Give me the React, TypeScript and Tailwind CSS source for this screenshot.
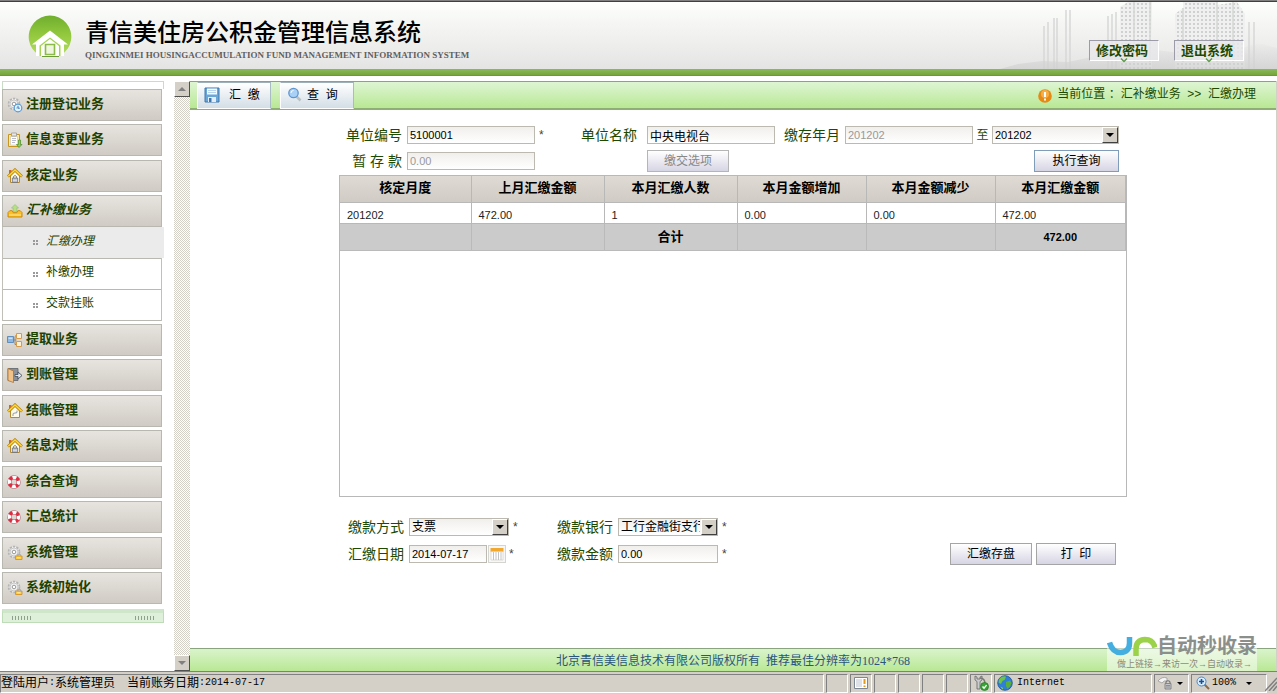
import React from 'react';
import clsx from 'clsx';

type IconName =
  | 'gearClock'
  | 'clipboard'
  | 'houseLock'
  | 'tray'
  | 'tree'
  | 'door'
  | 'housePen'
  | 'lifebuoy'
  | 'gearKey';

interface MenuItem {
  label: string;
  icon: IconName;
  children?: string[];
}

const MENU: MenuItem[] = [
  { label: '注册登记业务', icon: 'gearClock' },
  { label: '信息变更业务', icon: 'clipboard' },
  { label: '核定业务', icon: 'houseLock' },
  { label: '汇补缴业务', icon: 'tray', children: ['汇缴办理', '补缴办理', '交款挂账'] },
];

const MENU_REST: MenuItem[] = [
  { label: '提取业务', icon: 'tree' },
  { label: '到账管理', icon: 'door' },
  { label: '结账管理', icon: 'housePen' },
  { label: '结息对账', icon: 'houseLock' },
  { label: '综合查询', icon: 'lifebuoy' },
  { label: '汇总统计', icon: 'lifebuoy' },
  { label: '系统管理', icon: 'gearKey' },
  { label: '系统初始化', icon: 'gearKey' },
];

const COLUMNS = ['核定月度', '上月汇缴金额', '本月汇缴人数', '本月金额增加', '本月金额减少', '本月汇缴金额'];
const ROW = ['201202', '472.00', '1', '0.00', '0.00', '472.00'];

const Gear = () => (
  <>
    <circle cx="7" cy="7" r="5.4" fill="#f4f4f4" stroke="#b4b4b4" strokeWidth="1.8" strokeDasharray="2.2 1.2" />
    <circle cx="7" cy="7" r="4" fill="#f2f2f2" stroke="#bdbdbd" strokeWidth="0.8" />
    <circle cx="7" cy="7" r="1.8" fill="#fff" stroke="#8f8f8f" strokeWidth="0.9" />
  </>
);

const House = () => (
  <>
    <path d="M2 2h2.500v4H2z" fill="#d2642c" />
    <path d="M3.500 8v6.500h9V8L8 3.500z" fill="#fffbe8" stroke="#b98a2c" />
    <path d="M1 8.500 8 1.800l7 6.700" fill="none" stroke="#b8860b" strokeWidth="2.800" />
    <path d="M1.300 8.300 8 2l6.700 6.300" fill="none" stroke="#ffd83d" strokeWidth="1.500" />
  </>
);

const MenuIcon: React.FC<{ name: IconName }> = ({ name }) => (
  <svg viewBox="0 0 16 16" className="size-4 shrink-0" aria-hidden="true">
    {name === 'gearClock' && (
      <>
        <Gear />
        <circle cx="11" cy="11" r="3.8" fill="#e4f3ff" stroke="#5a9bd4" strokeWidth="1.2" />
        <path d="M11 8.8v2.4h1.8M9.5 11h1" fill="none" stroke="#3a78b8" />
      </>
    )}
    {name === 'gearKey' && (
      <>
        <Gear />
        <path d="M8.500 11H15v3.500H8.500z" fill="#ffc83a" stroke="#d18d1c" strokeWidth="0.8" />
        <path d="M10.3 11V9.6h3.2V11" fill="none" stroke="#a8a8a8" />
        <path d="M10 12.8h3.500" stroke="#fff0b0" />
      </>
    )}
    {name === 'clipboard' && (
      <>
        <path d="M1.5 2.5h11v12h-11z" fill="#fbe9a8" stroke="#c8961d" />
        <path d="M3.5 4.5h7v8.5h-7z" fill="#fff" stroke="#c9c3b0" strokeWidth="0.6" />
        <path d="M4.5 1h5v3h-5z" fill="#e8e8e8" stroke="#999" strokeWidth="0.8" />
        <path d="M5 6.5h4M5 8.5h4M5 10.5h3" stroke="#a9a9c4" strokeWidth="0.8" />
        <path d="M11.5 8v4.5h-2l2.500 3 3-3h-1.500V8z" fill="#8ccf52" stroke="#4c8b28" strokeWidth="0.7" />
      </>
    )}
    {name === 'houseLock' && (
      <>
        <House />
        <path d="M6.5 9.800V8.500q1.500-2 3 0v1.300" fill="none" stroke="#777" />
        <path d="M5.300 10h5.400v4.500H5.300z" fill="#b8bdc4" stroke="#6c7077" strokeWidth="0.8" />
        <path d="M6 12.200h4" stroke="#eef" strokeWidth="0.8" />
      </>
    )}
    {name === 'housePen' && (
      <>
        <House />
        <path d="M6 13q-.5-3 2-3t2-2.500" fill="none" stroke="#9aa6b8" strokeWidth="1.2" />
      </>
    )}
    {name === 'tray' && (
      <>
        <path d="M8 1.5 11.5 5H9.800v4H6.200V5H4.500z" fill="#b4e080" stroke="#9cc47a" strokeWidth="0.8" />
        <path d="m1 9.500 1.800-1.800h2.400l1 2h3.600l1-2h2.400L15 9.500V14H1z" fill="#ffbf1f" stroke="#c98a10" />
        <path d="M2 12h12" stroke="#ffe48a" strokeWidth="1.2" />
      </>
    )}
    {name === 'tree' && (
      <>
        <path d="M6 8h3.500M8 4.500v8M8 4h2M8 12.500h2" fill="none" stroke="#888" />
        <path d="M.5 4.500h6v6h-6z" fill="#8db9e4" stroke="#4d7fb2" strokeWidth="0.8" />
        <path d="M1.500 5.500h4v1.500h-4z" fill="#c9e1f7" />
        <path d="M9.500 1.500h5v5h-5zM9.500 9.500h5v5h-5z" fill="#fff1d8" stroke="#d79a4a" />
      </>
    )}
    {name === 'door' && (
      <>
        <path d="M1 1.500h10v12H1z" fill="#8a8f98" stroke="#5e636b" strokeWidth="0.8" />
        <path d="M1 1.500 6.500 4v11.500L1 13.500z" fill="#f1c28a" stroke="#ab7434" strokeWidth="0.8" />
        <path d="M8 7.500h3V5l4 3.500-4 3.500V9.500H8z" fill="#dfe6ee" stroke="#4a5563" strokeWidth="0.9" />
      </>
    )}
    {name === 'lifebuoy' && (
      <>
        <circle cx="7" cy="8" r="4.600" fill="none" stroke="#b0606c" strokeWidth="4.200" />
        <circle cx="7" cy="8" r="4.600" fill="none" stroke="#fff" strokeWidth="3.200" />
        <circle
          cx="7"
          cy="8"
          r="4.600"
          fill="none"
          stroke="#e02c40"
          strokeWidth="3.400"
          strokeDasharray="3.613 3.613"
          strokeDashoffset="1.806"
          transform="rotate(45 7 8)"
        />
      </>
    )}
  </svg>
);

const Logo = () => (
  <svg viewBox="0 0 44 44" className="size-11 shrink-0" aria-hidden="true">
    <defs>
      <linearGradient id="logo" x1="0" y1="0" x2="0" y2="1">
        <stop offset="0" stopColor="#6fae2e" />
        <stop offset="0.5" stopColor="#93c93e" />
        <stop offset="1" stopColor="#b4dd60" />
      </linearGradient>
    </defs>
    <path d="M11 41A21.300 21.300 0 1 1 33 41z" fill="url(#logo)" />
    <path d="M22 16.500 40 30.500h-4V42H8V30.500H4z" fill="#fff" />
    <path d="M22 23.500 32.500 31.500V42h-21V31.500z" fill="#a6d352" />
    <path d="M22 25 31 32v10H13V32z" fill="#fdfffa" />
    <path d="M17.500 30.500h9v10h-9z" fill="#eef7de" stroke="#8cba4a" strokeWidth="1.600" />
    <path d="M14 42.500h17" stroke="#6f9a3a" />
  </svg>
);

const Skyline = () => (
  <svg viewBox="0 0 277 67" className="absolute right-0 bottom-0 h-[67px] w-[277px]" aria-hidden="true">
    <defs>
      <pattern id="windows" width="4" height="4" patternUnits="userSpaceOnUse">
        <path d="M0 0h4v4H0z" fill="#eff0ef" />
        <path d="M1 1h2v2H1z" fill="#cfd1d0" />
      </pattern>
      <linearGradient id="fog" x1="0" y1="0" x2="0" y2="1">
        <stop offset="0" stopColor="#d4d4d4" stopOpacity="0.1" />
        <stop offset="1" stopColor="#cfcfcf" stopOpacity="0.7" />
      </linearGradient>
    </defs>
    <path d="M120 67V5l8-5h24v67zM175 67V12l8-6V0h34v67zM217 67V3l20-3 8 12v55z" fill="url(#windows)" />
    <path
      d="M44 67V24M48 67V20M54 67V16M57 67V16M66 67V8M70 67V8M108 67V14M112 67V12M116 67V10M134 60V0M150 60V0M183 60V6M217 60V0M233 60V0M249 67V20M254 67V20"
      stroke="#d6d8d6"
      strokeWidth="1.5"
    />
    <path d="M0 67l18-5 24-3 26 1 24-5 14-8 20 3 30-2 24 3 26-4 30 2 14-6 12-1 15 4v21z" fill="url(#fog)" />
  </svg>
);

const HeaderButton: React.FC<{ children: React.ReactNode }> = ({ children }) => (
  <button
    type="button"
    className="relative h-[21px] w-[70px] border border-t-[#9b9ca8] border-l-[#9b9ca8] border-r-white border-b-white bg-[#e9e9ec]/80 pr-1 text-[13px] leading-[19px] font-bold text-[#1d4a00]"
  >
    {children}
    <svg viewBox="0 0 8 5" className="absolute -bottom-[3px] left-[30px] h-[5px] w-2" aria-hidden="true">
      <path d="m1 .5 3 3 3-3" fill="none" stroke="#5f9a4c" strokeWidth="1.5" />
    </svg>
  </button>
);

const MenuButton: React.FC<{ item: MenuItem }> = ({ item }) => (
  <button
    type="button"
    className={clsx(
      'flex h-8 w-40 items-center gap-[3px] border border-[#b9b8b0] bg-linear-to-b from-[#e7e4df] to-[#d0cbc4] pl-1 text-left text-[13px] font-bold text-[#1d4200]',
      item.children && 'italic',
    )}
  >
    <MenuIcon name={item.icon} />
    <span className="pb-[3px] leading-4">{item.label}</span>
  </button>
);

const inputClass =
  'block h-[18px] w-full border border-[#bcbab0] bg-linear-to-b from-[#f0efec] to-white px-[2px] font-["Liberation_Sans","Noto_Sans_CJK_SC",sans-serif] leading-4 disabled:text-[#999]';

const labelClass = 'text-right text-sm leading-[18px] whitespace-nowrap text-[#1d4a00]';

const Select: React.FC<{ id: string; value: string; cjk?: boolean }> = ({ id, value, cjk }) => (
  <span className="relative block w-full">
    <select
      id={id}
      defaultValue={value}
      className={clsx(
        'block h-[18px] w-full appearance-none overflow-hidden border border-[#bcbab0] bg-linear-to-b from-[#f0efec] to-white pr-[17px] pl-[2px] leading-4 text-black',
        cjk ? 'text-xs' : 'text-[11px]',
      )}
    >
      <option>{value}</option>
    </select>
    <span className="pointer-events-none absolute top-px right-px flex h-4 w-4 items-center justify-center border border-t-white border-l-white border-r-[#404040] border-b-[#404040] bg-[#d4d0c8]">
      <span className="border-x-4 border-t-4 border-x-transparent border-t-black" />
    </span>
  </span>
);

const PushButton: React.FC<{ className?: string; disabled?: boolean; children: React.ReactNode }> = ({
  className,
  disabled,
  children,
}) => (
  <button
    type="button"
    disabled={disabled}
    className={clsx(
      'h-[22px] border bg-linear-to-b from-white to-[#d6d5e4] text-xs leading-5 whitespace-pre text-black disabled:text-[#888]',
      className,
    )}
  >
    {children}
  </button>
);

const Star = () => <span className="pl-1 text-xs leading-[18px] text-[#444]">*</span>;

const ToolbarTab: React.FC<{ icon: React.ReactNode; gap: string; children: React.ReactNode }> = ({
  icon,
  gap,
  children,
}) => (
  <button
    type="button"
    className={clsx(
      'flex h-[27px] w-[74px] items-center border border-t-[#9fb0b8] border-r-[#a9bcc4] border-b-white border-l-white bg-linear-to-b from-white to-[#d3dee6] pl-1.5 text-xs whitespace-pre text-black',
      gap,
    )}
  >
    {icon}
    {children}
  </button>
);

const Sidebar = () => (
  <nav className="w-[174px] shrink-0 pl-[2px]">
    <div className="h-2 w-[162px] border border-b-0 border-[#c9dcc5]" />
    {[MENU, MENU_REST].map((group, i) => (
      <ul key={i} className="mb-[3px]">
        {group.map((item, n) => (
          <li key={item.label} className={n === group.length - 1 ? '' : n % 2 ? 'mb-1' : 'mb-[3px]'}>
            <MenuButton item={item} />
            {item.children && (
              <ul className="w-40 border-x border-[#c0c0b8]">
                {item.children.map((child, c) => (
                  <li key={child} className="border-b border-[#b9b9b2]">
                    <a
                      href="#"
                      className={clsx(
                        'flex items-center gap-2 pl-[30px] text-xs text-[#1d4200]',
                        c === 0 ? '-mr-[3px] h-[31px] bg-[#ebebeb] italic' : 'h-[30px]',
                      )}
                    >
                      <svg viewBox="0 0 5 5" className="size-[5px]" aria-hidden="true">
                        <path d="M0 0h2v2H0zM3 0h2v2H3zM0 3h2v2H0zM3 3h2v2H3z" fill="#9a9a9a" />
                      </svg>
                      <span className="pb-1 leading-4">{child}</span>
                    </a>
                  </li>
                ))}
              </ul>
            )}
          </li>
        ))}
      </ul>
    ))}
    <div className="mt-[5px] flex h-[14px] w-[162px] items-end justify-between border border-[#bfdcb9] border-t-4 border-t-[#cfe6cb] bg-[#def0da] px-[9px] pb-[2px]">
      {[0, 1].map((n) => (
        <span key={n} className="h-1 w-[19px] bg-[repeating-linear-gradient(90deg,#8fa08c_0_1px,transparent_1px_3px)]" />
      ))}
    </div>
  </nav>
);

const ScrollButton: React.FC<{ up?: boolean }> = ({ up }) => (
  <button
    type="button"
    aria-label={up ? '向上滚动' : '向下滚动'}
    className="flex h-4 w-4 items-center justify-center border border-t-white border-l-white border-r-[#505050] border-b-[#505050] bg-[#d4d0c8]"
  >
    <span
      className={clsx(
        'border-x-4 border-x-transparent',
        up ? 'border-b-4 border-b-[#808080]' : 'border-t-4 border-t-[#808080]',
      )}
    />
  </button>
);

const Mono: React.FC<{ children: React.ReactNode }> = ({ children }) => (
  <span className="font-['Liberation_Mono',monospace] text-[10px]">{children}</span>
);

const StatusCell: React.FC<{ className?: string; children?: React.ReactNode }> = ({ className, children }) => (
  <div
    className={clsx(
      'flex h-[19px] shrink-0 items-center border border-t-[#808080] border-l-[#808080] border-r-white border-b-white',
      className,
    )}
  >
    {children}
  </div>
);

const StatusBar = () => (
  <div className="flex h-[23px] items-center gap-[2px] border-t border-[#808080] bg-[#d4d0c8] text-xs text-black">
    <StatusCell className="min-w-0 grow whitespace-pre">
      登陆用户<Mono>:</Mono>系统管理员<Mono>{'  '}</Mono>当前账务日期<Mono>:2014-07-17</Mono>
    </StatusCell>
    <StatusCell className="w-[22px]" />
    <StatusCell className="w-[22px] justify-center">
      <svg viewBox="0 0 14 12" className="h-3 w-[14px]" aria-hidden="true">
        <path d="M.5.5h13v11H.5z" fill="#fff" stroke="#7d8793" />
        <path d="M2 3h6M2 5h6M2 7h6M2 9h6" stroke="#aab4c4" strokeWidth="0.8" />
        <path d="M10.5 2v5M10.5 8.500v1.500" stroke="#e09a20" strokeWidth="2" />
      </svg>
    </StatusCell>
    <StatusCell className="w-[22px]" />
    <StatusCell className="w-[22px]" />
    <StatusCell className="w-[22px]" />
    <StatusCell className="w-[22px]" />
    <StatusCell className="w-[22px] justify-center">
      <svg viewBox="0 0 16 16" className="size-4" aria-hidden="true">
        <path d="M2 1v4l2 1.500V14h3V6.500L9 5V1L7 2v2H4V2z" fill="#c9cbce" stroke="#666" strokeWidth="0.8" />
        <path d="M7 3q5 0 5 6" fill="none" stroke="#777" strokeWidth="1.5" />
        <circle cx="11.5" cy="11.5" r="4" fill="#35a535" stroke="#1f7a1f" strokeWidth="0.7" />
        <path d="m9.500 11.500 1.500 1.600 2.600-3" fill="none" stroke="#fff" strokeWidth="1.4" />
      </svg>
    </StatusCell>
    <StatusCell className="w-[158px] gap-1 pl-0.5">
      <svg viewBox="0 0 16 16" className="size-4" aria-hidden="true">
        <circle cx="8" cy="8" r="7.300" fill="#2f7fd6" stroke="#1b4f92" strokeWidth="0.8" />
        <path d="M3 3q3-2.500 6-1.500L8 4.500 5.500 6 4 9 1.500 7.500Q1.500 5 3 3z" fill="#6cc24a" />
        <path d="m9 7 4-1.500L14.500 8 13 11.500 10.500 14 9 11z" fill="#58b03a" />
        <path d="M3.500 11.500 6 13l-.5 1.500z" fill="#8fd66e" />
      </svg>
      <Mono>Internet</Mono>
    </StatusCell>
    <StatusCell className="w-[35px] gap-1 pl-0.5">
      <svg viewBox="0 0 16 16" className="size-4 shrink-0" aria-hidden="true">
        <path d="M1 6q4-5 9-3v3q-3-1-5 2z" fill="#f4f4f4" stroke="#999" strokeWidth="0.8" />
        <path d="M9 8.500V7q2-2.500 4 0v1.500" fill="none" stroke="#777" strokeWidth="1.2" />
        <path d="M8 8.500h6V14H8z" fill="#c3c6ca" stroke="#777" strokeWidth="0.8" />
        <path d="M9 10.500h4M9 12h4" stroke="#777" strokeWidth="0.7" />
      </svg>
      <span className="border-x-[3px] border-t-[3px] border-x-transparent border-t-black" />
    </StatusCell>
    <StatusCell className="w-[76px] gap-0.5 pl-1">
      <svg viewBox="0 0 14 14" className="size-[14px]" aria-hidden="true">
        <path d="m8.500 8.500 4.500 4.500" stroke="#8a6a48" strokeWidth="2" />
        <circle cx="5.500" cy="5.500" r="4.500" fill="#d9edff" stroke="#4a88c8" />
        <path d="M5.500 3v5M3 5.500h5" stroke="#15509c" strokeWidth="1.6" />
      </svg>
      <Mono>100%</Mono>
      <span className="ml-2 border-x-[3px] border-t-[3px] border-x-transparent border-t-black" />
    </StatusCell>
    <svg viewBox="0 0 12 16" className="-ml-1 h-4 w-3 shrink-0" aria-hidden="true">
      <path d="M0 16 12 3M4 16l8-9M8 16l4-5" stroke="#808080" strokeWidth="1.5" />
    </svg>
  </div>
);

const Watermark = () => (
  <div className="absolute right-[19px] bottom-0 w-[150px] bg-linear-to-b from-transparent from-35% to-white/50 to-35% text-[#8b8f8b]">
    <div className="flex items-center pt-px">
      <svg viewBox="0 0 50 22" className="h-[22px] w-[50px] shrink-0" aria-hidden="true">
        <path d="M2.500 7.500q3 10 11 10 9-.5 9-9.500V2" fill="none" stroke="#45aee0" strokeWidth="5.500" />
        <path d="M29 21v-7q0-9 9-9.500 8 0 10 8" fill="none" stroke="#9bd24a" strokeWidth="5.500" />
      </svg>
      <span className="text-xl leading-[22px] font-bold">自动秒收录</span>
    </div>
    <p className="pl-[10px] text-[9px] leading-[14px] whitespace-nowrap text-[#8c8a7c]">做上链接→来访一次→自动收录→</p>
  </div>
);

export default function App() {
  return (
    <div className="flex min-h-screen flex-col bg-white font-['Liberation_Sans','Noto_Sans_CJK_SC',sans-serif]">
      <header className="border-t border-[#808080]">
        <div className="relative flex h-[68px] items-center border-t border-[#404040] bg-linear-to-b from-[#fdfffc] to-[#e5e4e4] pr-[33px] pl-7">
          <Skyline />
          <Logo />
          <div className="ml-[13px] pt-2">
            <h1 className="text-2xl leading-[30px] font-medium text-black">青信美住房公积金管理信息系统</h1>
            <p className="font-['Liberation_Serif',serif] text-[9px] leading-[14px] font-bold text-[#5f5f5f]">
              QINGXINMEI HOUSINGACCUMULATION FUND MANAGEMENT INFORMATION SYSTEM
            </p>
          </div>
          <div className="relative ml-auto flex gap-[15px] pt-[30px]">
            <HeaderButton>修改密码</HeaderButton>
            <HeaderButton>退出系统</HeaderButton>
          </div>
        </div>
        <div className="h-[7px] border-b border-[#6b9a35] bg-linear-to-b from-[#8aba5c] to-[#76a53a]" />
      </header>

      <div className="mt-[5px] flex grow">
        <Sidebar />
        <div className="flex w-4 shrink-0 flex-col justify-between bg-[repeating-conic-gradient(#d4d0c8_0_25%,#ffffff_0_50%)] bg-[length:2px_2px]">
          <ScrollButton up />
          <ScrollButton />
        </div>

        <div className="relative flex min-w-0 grow flex-col border-r border-[#d4d0c8]">
          <div className="flex h-[29px] items-center border-t border-b-2 border-t-[#8aa57e] border-b-[#8fae76] bg-linear-to-b from-[#def5d3] to-[#b9e893] pr-5 pl-[7px]">
            <div className="flex gap-[9px]">
              <ToolbarTab
                gap="gap-[9px]"
                icon={
                  <svg viewBox="0 0 16 16" className="size-4" aria-hidden="true">
                    <path d="M1 1h14v14H1z" fill="#6ba6d8" stroke="#3f78ae" />
                    <path d="M3 1.500h10v6H3z" fill="#f3f9ff" />
                    <path d="M4 3.500h8M4 5.500h8" stroke="#b9d3ea" />
                    <path d="M4 10h8v5H4z" fill="#e3eefa" />
                    <path d="M5 11h2.500v4H5z" fill="#3f78ae" />
                  </svg>
                }
              >
                {'汇  缴'}
              </ToolbarTab>
              <ToolbarTab
                gap="gap-1"
                icon={
                  <svg viewBox="0 0 16 16" className="size-4" aria-hidden="true">
                    <path d="m9.500 9.500 4 4" stroke="#b9c0c6" strokeWidth="2.5" />
                    <circle cx="6.500" cy="6" r="4.700" fill="#a9d0f5" stroke="#5f95cf" strokeWidth="1.3" />
                    <path d="M4 6q0-2.500 2.500-2.500" fill="none" stroke="#fff" />
                  </svg>
                }
              >
                {'查  询'}
              </ToolbarTab>
            </div>
            <div className="ml-auto flex items-center text-xs whitespace-pre text-[#1d4a00]">
              <svg viewBox="0 0 14 14" className="mt-0.5 mr-[5px] size-[14px]" aria-hidden="true">
                <circle cx="7" cy="7" r="6.800" fill="#e58a14" />
                <circle cx="7" cy="5" r="4" fill="#f5ae48" />
                <path d="M7 3v5M7 9.500v2" stroke="#fff" strokeWidth="2" />
              </svg>
              <span className="pb-0.5">{'当前位置 ：汇补缴业务  >>  汇缴办理'}</span>
            </div>
          </div>

          <main className="mx-auto w-full max-w-[788px] pt-4">
            <div className="grid grid-cols-[68px_128px_112px_128px_70px_128px_19px_127px] items-center gap-y-1.5">
              <label htmlFor="unitNo" className={clsx(labelClass, 'pr-[5px]')}>单位编号</label>
              <input id="unitNo" className={clsx(inputClass, 'text-[11px]')} defaultValue="5100001" />
              <div className="flex justify-between">
                <Star />
                <label htmlFor="unitName" className={clsx(labelClass, 'pr-[10px]')}>单位名称</label>
              </div>
              <input id="unitName" className={clsx(inputClass, 'text-xs')} defaultValue="中央电视台" />
              <label htmlFor="monthFrom" className={clsx(labelClass, 'pr-[5px]')}>缴存年月</label>
              <input id="monthFrom" disabled className={clsx(inputClass, 'text-[11px]')} defaultValue="201202" />
              <label htmlFor="monthTo" className="text-center text-xs leading-[18px] text-[#1d4a00]">至</label>
              <Select id="monthTo" value="201202" />

              <label htmlFor="deposit" className={clsx(labelClass, 'pr-[5px]')}>暂 存 款</label>
              <input id="deposit" disabled className={clsx(inputClass, 'text-[11px]')} defaultValue="0.00" />
              <PushButton disabled className="col-start-4 w-[82px] border-[#b5b5b5]">缴交选项</PushButton>
              <PushButton className="col-start-8 w-[85px] justify-self-end border-[#7f9db9]">执行查询</PushButton>
            </div>

            <div className="mt-[3px] h-[322px] border border-[#b8b8b8]">
              <table className="w-full table-fixed border-collapse">
                <colgroup>
                  <col className="w-[131px]" />
                  <col className="w-[133px]" />
                  <col className="w-[133px]" />
                  <col className="w-[129px]" />
                  <col className="w-[129px]" />
                  <col />
                </colgroup>
                <thead>
                  <tr className="h-[26px] bg-linear-to-b from-[#dfdbd4] to-[#d0cbc4]">
                    {COLUMNS.map((c) => (
                      <th key={c} className="border-r border-b border-[#b8b8b8] p-0 pb-[2px] text-[13px] leading-4 font-bold text-black">
                        {c}
                      </th>
                    ))}
                  </tr>
                </thead>
                <tbody>
                  <tr className="h-[21px]">
                    {ROW.map((v, n) => (
                      <td key={n} className="border-r border-b border-[#b8b8b8] p-0 pt-1 pl-[7px] text-[11px] leading-4 text-[#222]">
                        {v}
                      </td>
                    ))}
                  </tr>
                </tbody>
                <tfoot>
                  <tr className="h-[27px] bg-[#cbcbcb]">
                    {['', '', '合计', '', '', '472.00'].map((v, n) => (
                      <td
                        key={n}
                        className={clsx(
                          'border-r border-b border-[#bababa] p-0 text-center leading-4 font-bold text-black',
                          n === 2 ? 'text-[13px]' : 'text-[11px]',
                        )}
                      >
                        {v}
                      </td>
                    ))}
                  </tr>
                </tfoot>
              </table>
            </div>

            <div className="mt-[19px] flex items-end">
              <div className="grid grid-cols-[70px_100px_109px_100px_14px] items-center gap-y-[5px]">
                <label htmlFor="payType" className={clsx(labelClass, 'pr-[5px]')}>缴款方式</label>
                <Select id="payType" value="支票" cjk />
                <div className="flex h-[22px] items-center justify-between">
                  <Star />
                  <label htmlFor="bank" className={clsx(labelClass, 'pr-[5px]')}>缴款银行</label>
                </div>
                <Select id="bank" value="工行金融街支行" cjk />
                <Star />

                <label htmlFor="payDate" className={clsx(labelClass, 'pr-[5px]')}>汇缴日期</label>
                <div className="flex items-center gap-px">
                  <input id="payDate" className={clsx(inputClass, 'max-w-[78px] text-[11px]')} defaultValue="2014-07-17" />
                  <button type="button" aria-label="选择日期" className="flex h-[18px] w-[18px] items-center justify-center border border-[#d4d4d0] bg-[#f7f7f7]">
                    <svg viewBox="0 0 14 14" className="size-[14px]" aria-hidden="true">
                      <path d="M1 4h12v9H1z" fill="#fff" stroke="#d8d4cc" strokeWidth="0.8" />
                      <path d="M3.500 5v8M6 5v8M8.500 5v8M11 5v8" stroke="#c4c4c4" />
                      <path d="M.5 1h13v3.500H.5z" fill="#f0a830" />
                    </svg>
                  </button>
                </div>
                <div className="flex h-[22px] items-center justify-between">
                  <span className="text-xs text-[#444]">*</span>
                  <label htmlFor="amount" className={clsx(labelClass, 'pr-[5px]')}>缴款金额</label>
                </div>
                <input id="amount" className={clsx(inputClass, 'text-[11px]')} defaultValue="0.00" />
                <Star />
              </div>
              <div className="ml-auto flex gap-1 pr-[11px]">
                <PushButton className="w-[82px] border-[#a5a5a5]">汇缴存盘</PushButton>
                <PushButton className="w-20 border-[#a5a5a5]">{'打  印'}</PushButton>
              </div>
            </div>
          </main>

          <footer className="mt-auto h-[23px] border-t border-[#8aa57e] bg-linear-to-b from-[#d9f3cb] to-[#b9e893] text-center font-['Liberation_Serif','Noto_Sans_CJK_SC',serif] text-xs leading-[25px] whitespace-pre text-[#2a5580]">
            {'北京青信美信息技术有限公司版权所有  推荐最佳分辨率为1024*768'}
          </footer>
          <Watermark />
        </div>
      </div>

      <StatusBar />
    </div>
  );
}
